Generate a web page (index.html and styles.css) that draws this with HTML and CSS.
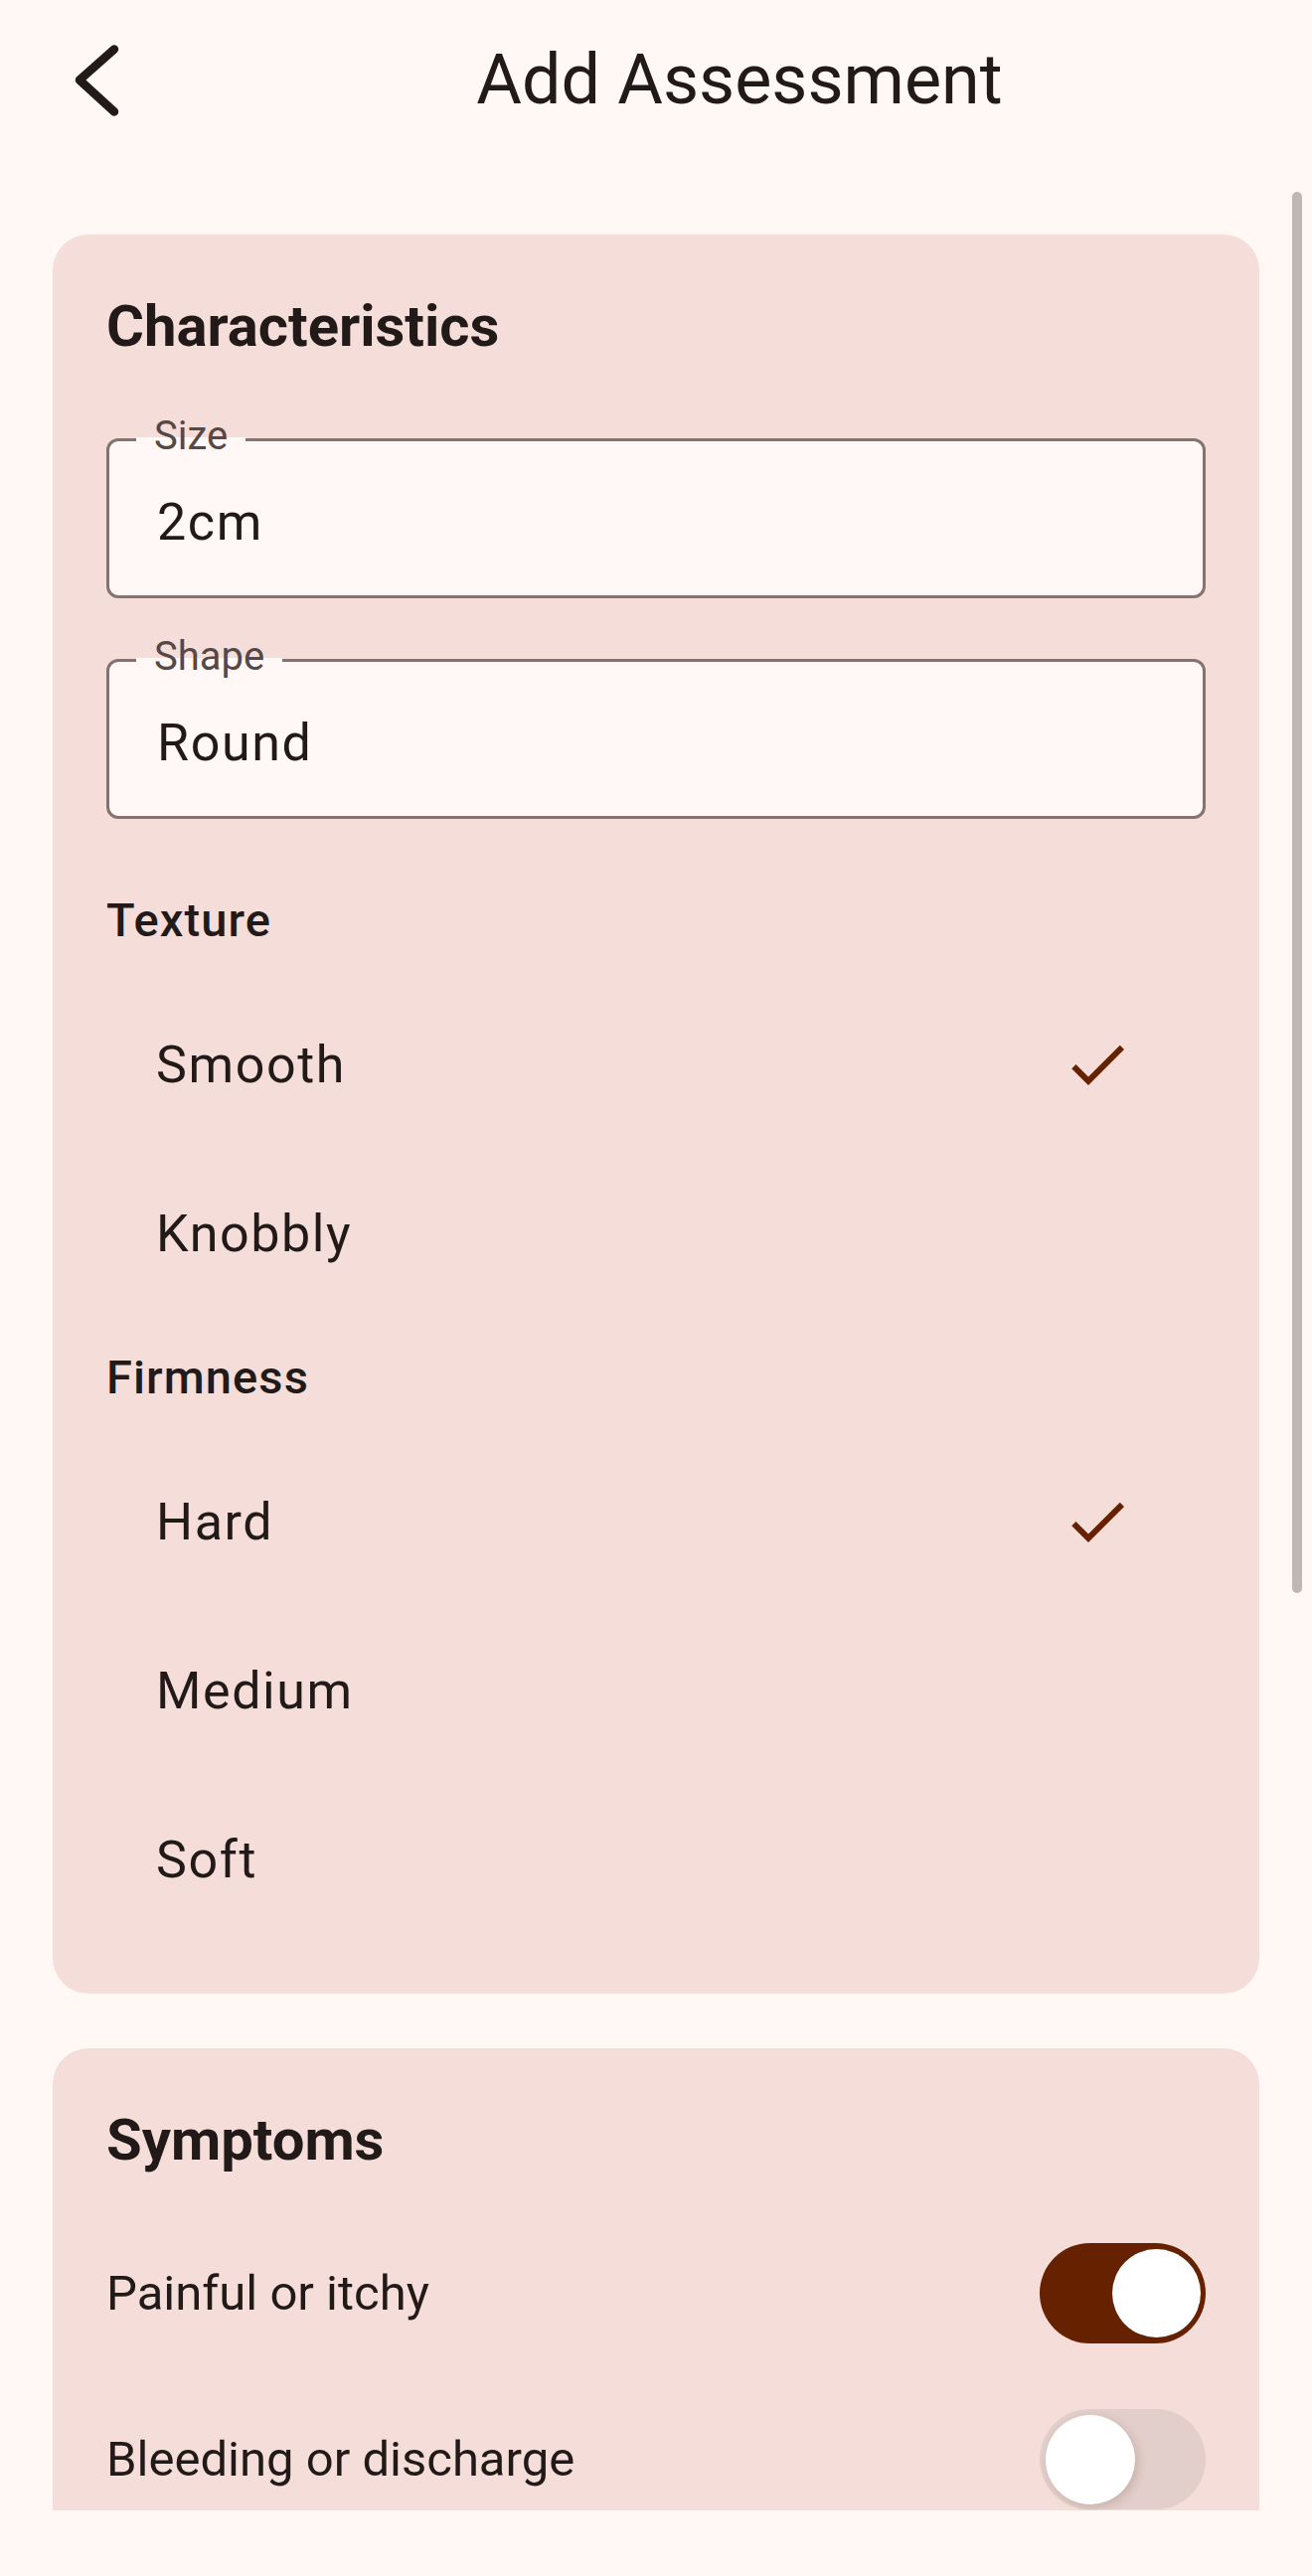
FILE: index.html
```html
<!DOCTYPE html>
<html lang="en">
<head>
<meta charset="utf-8">
<title>Add Assessment</title>
<link rel="stylesheet" href="styles.css">
</head>
<body>
<div class="screen">
  <header class="app-bar">
    <div class="leading">
      <svg class="back-icon" width="52" height="78" viewBox="0 0 52 78" aria-hidden="true">
        <polyline points="43,7.5 8,38.5 43,70.5" fill="none" stroke="#201a19" stroke-width="8.5" stroke-linecap="round" stroke-linejoin="round"/>
      </svg>
    </div>
    <h1 class="title">Add Assessment</h1>
  </header>

  <main class="content">
    <section class="card">
      <h2 class="card-title">Characteristics</h2>

      <div class="field">
        <span class="field-label">Size</span>
        <div class="field-value">2cm</div>
      </div>

      <div class="field">
        <span class="field-label">Shape</span>
        <div class="field-value">Round</div>
      </div>

      <h3 class="group-label">Texture</h3>
      <ul class="options">
        <li class="option">
          <span class="option-text">Smooth</span>
          <svg class="check" width="72" height="72" viewBox="0 0 24 24" aria-hidden="true"><path d="M9 16.17L4.83 12l-1.42 1.41L9 19 21 7l-1.41-1.41z" fill="#662200"/></svg>
        </li>
        <li class="option"><span class="option-text">Knobbly</span></li>
      </ul>

      <h3 class="group-label">Firmness</h3>
      <ul class="options">
        <li class="option">
          <span class="option-text">Hard</span>
          <svg class="check" width="72" height="72" viewBox="0 0 24 24" aria-hidden="true"><path d="M9 16.17L4.83 12l-1.42 1.41L9 19 21 7l-1.41-1.41z" fill="#662200"/></svg>
        </li>
        <li class="option"><span class="option-text">Medium</span></li>
        <li class="option"><span class="option-text">Soft</span></li>
      </ul>
    </section>

    <section class="card card-symptoms">
      <h2 class="card-title">Symptoms</h2>
      <div class="switch-row">
        <span class="switch-text">Painful or itchy</span>
        <span class="switch switch-on"><span class="thumb"></span></span>
      </div>
      <div class="switch-row">
        <span class="switch-text">Bleeding or discharge</span>
        <span class="switch switch-off"><span class="thumb"></span></span>
      </div>
    </section>

    <div class="scrollbar"></div>
  </main>
</div>
</body>
</html>
```

FILE: styles.css
```css
html, body {
  margin: 0;
  padding: 0;
  background: #fff8f5;
  overflow: hidden;
}

body {
  font-family: Roboto, "Noto Sans", "Liberation Sans", sans-serif;
  color: #221a19;
}

.screen {
  width: 1320px;
  height: 2592px;
  display: flex;
  flex-direction: column;
  background: #fff8f5;
}

.app-bar {
  height: 161px;
  flex: 0 0 161px;
  display: flex;
  align-items: center;
}

.leading {
  width: 168px;
  flex: 0 0 168px;
  display: flex;
  align-items: center;
}

.back-icon {
  margin-left: 72px;
  display: block;
}

.title {
  flex: 1;
  margin: 0;
  text-align: center;
  font-size: 70px;
  line-height: 83px;
  font-weight: 400;
  color: #201a19;
}

.content {
  position: relative;
  height: 2365px;
  flex: 0 0 2365px;
  box-sizing: border-box;
  padding: 75px 53px 0;
  overflow: hidden;
}

.card {
  background: #f5ded9;
  border-radius: 36px;
  padding: 58px 54px 50px;
}

.card-symptoms {
  margin-top: 55px;
}

.card-title {
  margin: 0;
  font-size: 58px;
  line-height: 68px;
  font-weight: 700;
  color: #221a19;
}

.field {
  position: relative;
  border: 3px solid #857370;
  border-radius: 12px;
  background: #fff8f6;
  padding: 51px 48px 43px;
  margin-top: 61px;
}

.card-title + .field {
  margin-top: 79px;
}

.field-label {
  position: absolute;
  top: -29px;
  left: 27px;
  padding: 0 18px;
  font-size: 40px;
  line-height: 47px;
  color: #574846;
  background: linear-gradient(to bottom, transparent 25px, #fff8f6 25px);
}

.field-value {
  font-size: 52px;
  line-height: 61px;
  letter-spacing: 1.6px;
  color: #221a19;
}

.group-label {
  margin: 32px 0 0;
  font-size: 47px;
  line-height: 56px;
  font-weight: 500;
  letter-spacing: 1.1px;
  color: #221a19;
}

.field + .group-label {
  margin-top: 74px;
}

.options {
  list-style: none;
  margin: 32px 0 0;
  padding: 0;
}

.option {
  height: 170px;
  display: flex;
  align-items: center;
  justify-content: space-between;
  padding: 0 73px 0 50px;
}

.option-text {
  font-size: 52px;
  line-height: 61px;
  letter-spacing: 1.6px;
  color: #221a19;
}

.check {
  display: block;
}

.switch-row {
  height: 167px;
  display: flex;
  align-items: center;
  justify-content: space-between;
}

.card-title + .switch-row {
  margin-top: 37px;
}

.switch-text {
  font-size: 49px;
  line-height: 57px;
  color: #221a19;
}

.switch {
  box-sizing: border-box;
  width: 167px;
  height: 101px;
  border-radius: 51px;
  display: flex;
  align-items: center;
}

.switch-on {
  background: #662200;
  justify-content: flex-end;
  padding: 0 5px;
}

.switch-on .thumb {
  width: 89px;
  height: 89px;
}

.switch-off {
  background: #e2ceca;
  justify-content: flex-start;
  padding: 0 6px;
}

.switch-off .thumb {
  width: 90px;
  height: 90px;
  box-shadow: 3px 3px 10px rgba(90, 50, 40, 0.18);
}

.thumb {
  display: block;
  border-radius: 50%;
  background: #ffffff;
}

.scrollbar {
  position: absolute;
  top: 32px;
  right: 10px;
  width: 10px;
  height: 1410px;
  border-radius: 5px;
  background: #bdb7b6;
}
```
